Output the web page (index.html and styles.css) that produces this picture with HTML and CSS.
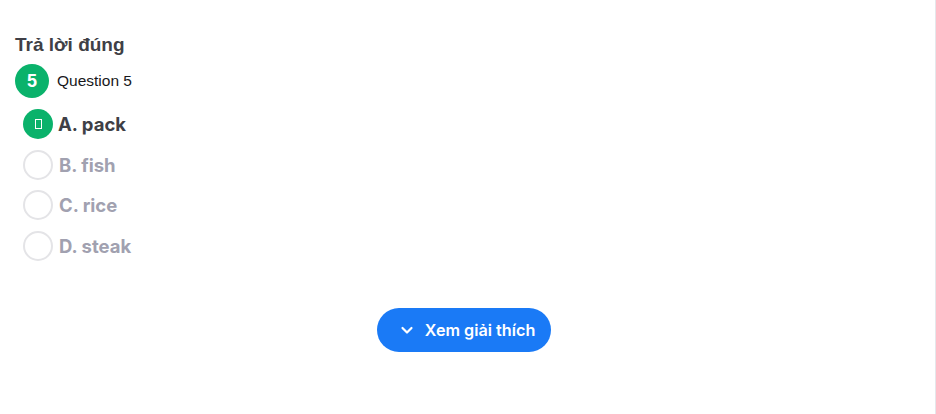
FILE: index.html
```html
<!DOCTYPE html>
<html lang="vi">
<head>
<meta charset="utf-8">
<link rel="stylesheet" href="styles.css">
</head>
<body>
<div class="page">
  <main class="quiz">
    <h2 class="status">Trả lời đúng</h2>
    <div class="question">
      <span class="qnum">5</span>
      <span class="qtext">Question 5</span>
    </div>
    <ul class="options">
      <li class="option correct"><span class="radio"><span class="tofu"></span></span><span class="label">A. pack</span></li>
      <li class="option"><span class="radio"></span><span class="label">B. fish</span></li>
      <li class="option"><span class="radio"></span><span class="label">C. rice</span></li>
      <li class="option"><span class="radio"></span><span class="label">D. steak</span></li>
    </ul>
    <div class="actions">
      <button class="explain">
        <svg width="14" height="14" viewBox="0 0 14 14" fill="none" stroke="#fff" stroke-width="2.2" stroke-linecap="round" stroke-linejoin="round"><path d="M2.5 5 L7 9.5 L11.5 5"/></svg>
        <span>Xem giải thích</span>
      </button>
    </div>
  </main>
</div>
</body>
</html>
```
FILE: styles.css
```css
html, body {
  margin: 0;
  padding: 0;
  background: #fff;
}
body {
  font-family: Inter, "Noto Sans", sans-serif;
}
.page {
  width: 935px;
  height: 414px;
  border-right: 1px solid #e5e7eb;
  box-sizing: content-box;
}
.quiz {
  padding: 33px 0 0 15px;
}
.status {
  margin: 0;
  font-family: "Liberation Sans", Arial, sans-serif;
  font-size: 19px;
  font-weight: 700;
  color: #3f3f46;
  line-height: 24px;
}
.question {
  display: flex;
  align-items: center;
  gap: 8px;
  margin-top: 7px;
}
.qnum {
  width: 34px;
  height: 34px;
  border-radius: 50%;
  background: #0ab26b;
  color: #fff;
  font-family: "Liberation Sans", Arial, sans-serif;
  font-weight: 700;
  font-size: 18px;
  display: flex;
  align-items: center;
  justify-content: center;
}
.qtext {
  font-size: 15.5px;
  color: #18181b;
  font-family: "Liberation Sans", Arial, sans-serif;
}
.options {
  list-style: none;
  margin: 11px 0 0 8px;
  padding: 0;
  display: flex;
  flex-direction: column;
  gap: 10.5px;
}
.option {
  display: flex;
  align-items: center;
  gap: 6px;
  height: 30px;
}
.radio {
  width: 26px;
  height: 26px;
  border: 2px solid #e4e4e7;
  border-radius: 50%;
  display: flex;
  align-items: center;
  justify-content: center;
}
.correct .radio {
  width: 30px;
  height: 30px;
  border: none;
  background: #0ab26b;
}
.correct .label {
  margin-left: -1px;
}
.tofu {
  width: 5px;
  height: 8px;
  border: 1px solid #fff;
}
.label {
  font-size: 18.5px;
  font-weight: 700;
  color: #a1a1b0;
}
.correct .label {
  color: #3f3f46;
}
.actions {
  display: flex;
  justify-content: center;
  margin-top: 47px;
  padding-right: 22px;
}
.explain {
  display: flex;
  align-items: center;
  gap: 11px;
  height: 44px;
  padding: 0 16px 0 23px;
  border: none;
  border-radius: 22px;
  background: #1a7af6;
  color: #fff;
  font-family: Inter, "Noto Sans", sans-serif;
  font-size: 16.2px;
  font-weight: 600;
}
```
